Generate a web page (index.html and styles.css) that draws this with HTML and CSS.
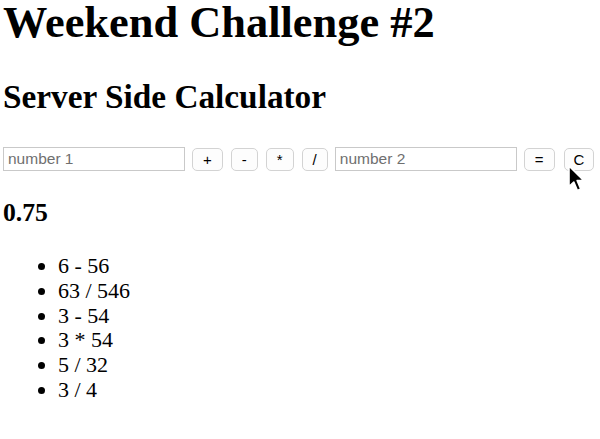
FILE: index.html
```html
<!DOCTYPE html>
<html>
<head>
<meta charset="utf-8">
<title>Weekend Challenge #2</title>
<link rel="stylesheet" href="styles.css">
</head>
<body>
<h1 class="title">Weekend Challenge #2</h1>
<h2 class="subtitle">Server Side Calculator</h2>
<div class="calc">
  <input class="num" type="text" placeholder="number 1">
  <button class="op">+</button>
  <button class="op">-</button>
  <button class="op">*</button>
  <button class="op">/</button>
  <input class="num" type="text" placeholder="number 2">
  <button class="op eq">=</button>
  <span class="clear-wrap">
    <button class="op clear">C</button>
    <svg class="cursor" width="20" height="30" viewBox="0 0 20 30">
      <path d="M2 1 L2 21.5 L6.8 17 L10.4 25.6 L13.8 24.1 L10.2 15.6 L16.6 15.4 Z" fill="#000" stroke="#fff" stroke-width="1.6" stroke-linejoin="round"/>
    </svg>
  </span>
</div>
<h3 class="result">0.75</h3>
<ul class="history">
  <li>6 - 56</li>
  <li>63 / 546</li>
  <li>3 - 54</li>
  <li>3 * 54</li>
  <li>5 / 32</li>
  <li>3 / 4</li>
</ul>
</body>
</html>
```
FILE: styles.css
```css
html, body {
  margin: 0;
  padding: 0;
  background: #ffffff;
}
body {
  padding-left: 3px;
  font-family: "Liberation Serif", "Times New Roman", serif;
  color: #000;
}
.title {
  margin: 0;
  font-size: 44.4px;
  line-height: 44px;
  font-weight: bold;
}
.subtitle {
  margin: 34px 0 0;
  font-size: 33.3px;
  line-height: 38px;
  font-weight: bold;
}
.calc {
  margin-top: 31px;
  display: flex;
  align-items: center;
  height: 24px;
}
.num {
  box-sizing: border-box;
  width: 182px;
  height: 24px;
  margin: 0;
  padding: 0 4px;
  border: 1px solid #c9c9c9;
  border-radius: 0;
  font-family: "Liberation Sans", Arial, sans-serif;
  font-size: 15.5px;
  color: #000;
  background: #fff;
  outline: none;
}
.num::placeholder {
  color: #6f6f6f;
}
.op {
  box-sizing: border-box;
  height: 23px;
  margin: 0 0 0 8px;
  padding: 0 10px;
  border: 1px solid #d3d3d3;
  border-radius: 5px;
  background: #fdfdfd;
  font-family: "Liberation Sans", Arial, sans-serif;
  font-size: 15px;
  color: #000;
  line-height: 21px;
}
.num + .op {
  margin-left: 7px;
}
.op + .num {
  margin-left: 7px;
}
.eq {
  margin-left: 5px;
}
.clear-wrap {
  position: relative;
  display: inline-flex;
  margin-left: 9px;
}
.clear {
  margin-left: 0;
  padding: 0 9px;
}
.cursor {
  position: absolute;
  left: 3px;
  top: 17px;
}
.result {
  margin: 27px 0 0;
  font-size: 25.7px;
  line-height: 30px;
  font-weight: bold;
}
.history {
  margin: 26px 0 0;
  padding-left: 55px;
  font-size: 22px;
  line-height: 24.75px;
}
```
